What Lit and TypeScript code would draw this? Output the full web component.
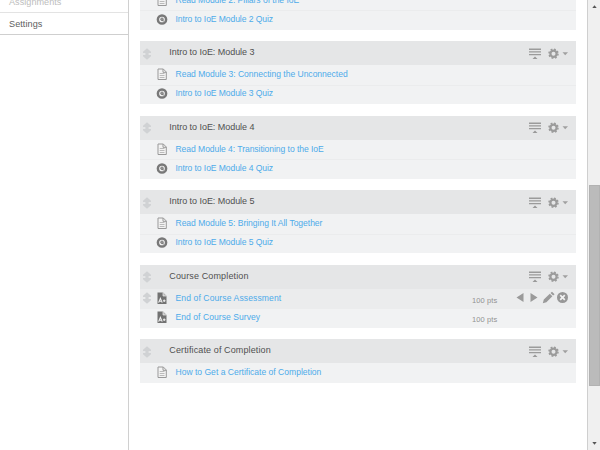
import { LitElement, html, svg, css } from "lit";
import { customElement } from "lit/decorators.js";
import { styleMap } from "lit/directives/style-map.js";

type Kind = "page" | "quiz" | "assignment";
interface Item { kind: Kind; title: string; tracking: number; points?: string; active?: boolean }
interface Module { title: string; tracking: number; items: Item[] }

const modules: Module[] = [
  { title: "Intro to IoE: Module 2", tracking: -0.04, items: [
    { kind: "page", title: "Read Module 2: Pillars of the IoE", tracking: -0.04 },
    { kind: "quiz", title: "Intro to IoE Module 2 Quiz", tracking: -0.07 } ] },
  { title: "Intro to IoE: Module 3", tracking: -0.04, items: [
    { kind: "page", title: "Read Module 3: Connecting the Unconnected", tracking: -0.02 },
    { kind: "quiz", title: "Intro to IoE Module 3 Quiz", tracking: -0.07 } ] },
  { title: "Intro to IoE: Module 4", tracking: -0.04, items: [
    { kind: "page", title: "Read Module 4: Transitioning to the IoE", tracking: -0.05 },
    { kind: "quiz", title: "Intro to IoE Module 4 Quiz", tracking: -0.07 } ] },
  { title: "Intro to IoE: Module 5", tracking: -0.04, items: [
    { kind: "page", title: "Read Module 5: Bringing It All Together", tracking: -0.03 },
    { kind: "quiz", title: "Intro to IoE Module 5 Quiz", tracking: -0.07 } ] },
  { title: "Course Completion", tracking: 0.13, items: [
    { kind: "assignment", title: "End of Course Assessment", tracking: 0.11, points: "100 pts", active: true },
    { kind: "assignment", title: "End of Course Survey", tracking: 0.05, points: "100 pts" } ] },
  { title: "Certificate of Completion", tracking: 0.12, items: [
    { kind: "page", title: "How to Get a Certificate of Completion", tracking: 0 } ] },
];

const spaced = (tracking: number) => styleMap({ letterSpacing: `${tracking}px` });

const grip = html`<svg class="grip" width="10" height="12" viewBox="0 0 10 12">
  <path d="M5 .3L9 3.8V5H6.6V7H9V8.2L5 11.7L1 8.2V7H3.4V5H1V3.8Z" fill="#d0d2d4"/></svg>`;

const glyphs = {
  page: svg`<path d="M2 1H7.3L10.3 4V11.5H2Z" fill="#f3f3f3" stroke="#999" stroke-width="1"/><path d="M7 1V4.3H10.3" fill="none" stroke="#999"/><path d="M3.7 5.5H8.5M3.7 7.5H8.5M3.7 9.5H8.5" stroke="#b4b4b4" stroke-width=".9"/>`,
  quiz: svg`<circle cx="6" cy="6.5" r="4.1" fill="#f1f1f1" stroke="#787878" stroke-width="2.5"/><circle cx="6" cy="6.3" r="1.3" fill="#999" stroke="#858585" stroke-width="1"/><path d="M6.4 7L7.6 8.4" stroke="#777" stroke-width="1.1"/>`,
  assignment: svg`<path d="M1.5 .5H7L10.5 4V12H1.5Z" fill="#727272"/><path d="M7 .5V4H10.5" fill="#bbb" stroke="#eee" stroke-width=".7"/><path d="M2.6 10.6L4.4 6.4L6.2 10.6M3.3 9.2H5.6M6.9 8.8H9.5M8.2 7.5V10.1" fill="none" stroke="#eee" stroke-width="1.1"/>`,
};

@customElement("app-root")
export class AppRoot extends LitElement {
  static styles = css`
    :host { display: flex; width: 600px; height: 450px; overflow: hidden; background: #fff;
      font-family: "Liberation Sans", Arial, sans-serif; font-size: 9px; color: #555; }
    * { box-sizing: border-box; }
    svg { display: block; flex: none; }
    .nav { width: 129px; border-right: 1px solid #d0d0d0; flex: none; }
    .link { height: 22px; border-bottom: 1px solid #cfcfcf; padding-left: 9px; line-height: 22px; font-size: 9.1px; letter-spacing: .07px; color: #606060; }
    .link.muted { height: 13px; border-color: #e3e3e3; line-height: 5px; color: #bdbdbd; letter-spacing: .03px; }
    .content { width: 458px; padding: 0 11px; overflow: hidden; flex: none; }
    .list { display: flex; flex-direction: column; gap: 11.5px; margin-top: -33.5px; }
    .module { flex: none; background: #f1f2f3; }
    .head { height: 24px; background: #e5e6e7; display: flex; align-items: center; padding: 0 5px 0 2px; }
    .title { flex: 1; margin-left: 17.3px; font-size: 9px; line-height: 12px; color: #505050; padding-bottom: 1.6px; }
    .grip { margin-top: 1px; }
    .tools { margin-top: 1px; }
    .row { height: 19.5px; display: flex; align-items: center; padding: 0 7px 1px 2px; }
    .row + .row { border-top: 1px solid #ebeced; padding-bottom: 3px; }
    .row.active { background: #ebeced; }
    .slot { width: 14px; flex: none; }
    .kind { margin-top: 1px; }
    .name { flex: 1; margin-left: 7.5px; line-height: 12px; font-size: 8.55px; color: #4dabea; }
    .points { width: 44px; font-size: 7.5px; letter-spacing: .1px; color: #929292; margin-top: 5px; }
    .actions { width: 53px; }
    .bar { width: 13px; background: #f0f0f0; border-left: 1px solid #cfcfcf; display: flex; flex-direction: column; align-items: center; padding: 5px 0; flex: none; }
    .thumb { width: 11px; height: 201px; background: #bbb; border: 1px solid #b2b2b2; margin-top: 177px; }
    .down { margin-top: auto; }
  `;

  private tools() {
    return html`<svg class="tools" width="42" height="14" viewBox="0 0 42 14">
      <path d="M0 2.2H12M0 4.9H12M0 7.6H12" stroke="#9b9b9b" stroke-width="1.4"/><path d="M3.5 12L6 9.6L8.5 12Z" fill="#999"/>
      <circle cx="24.5" cy="6.7" r="3.1" fill="none" stroke="#9b9b9b" stroke-width="2.2"/>
      <circle cx="24.5" cy="6.7" r="4.5" fill="none" stroke="#9b9b9b" stroke-width="1.5" stroke-dasharray="1.8 1.734"/>
      <path d="M33.5 5.3H39L36.2 8.2Z" fill="#a0a0a0"/></svg>`;
  }

  private actions() {
    return html`<svg width="53" height="13" viewBox="0 0 53 13">
      <path d="M7.5 2V11L.5 6.5ZM14.5 2V11L21.5 6.5Z" fill="#9a9a9a"/>
      <path d="M26.8 12.2L27.8 8.6L33.8 2.8L36.4 5.3L30.4 11.2ZM34.5 2.1L36 .8L38.6 3.2L37.1 4.6Z" fill="#9a9a9a"/>
      <circle cx="46.5" cy="6.5" r="5.5" fill="#979797"/><path d="M44.2 4.2L48.8 8.8M48.8 4.2L44.2 8.8" stroke="#f1f1f1" stroke-width="1.7"/></svg>`;
  }

  render() {
    return html`
      <nav class="nav"><div class="link muted">Assignments</div><div class="link">Settings</div></nav>
      <main class="content"><div class="list">
        ${modules.map((m) => html`<section class="module">
          <div class="head">${grip}<span class="title" style=${spaced(m.tracking)}>${m.title}</span>${this.tools()}</div>
          ${m.items.map((i) => html`<div class="row ${i.active ? "active" : ""}">
            <span class="slot">${i.active ? grip : ""}</span>
            <svg class="kind" width="12" height="13" viewBox="0 0 12 13">${glyphs[i.kind]}</svg>
            <span class="name" style=${spaced(i.tracking)}>${i.title}</span>
            ${i.points ? html`<span class="points">${i.points}</span><span class="actions">${i.active ? this.actions() : ""}</span>` : ""}
          </div>`)}
        </section>`)}
      </div></main>
      <aside class="bar">
        <svg width="5" height="3" viewBox="0 0 5 3"><path d="M.3 3L2.5 .2L4.7 3Z" fill="#555"/></svg>
        <div class="thumb"></div>
        <svg class="down" width="5" height="3" viewBox="0 0 5 3"><path d="M.3 0L2.5 2.8L4.7 0Z" fill="#555"/></svg>
      </aside>`;
  }
}
